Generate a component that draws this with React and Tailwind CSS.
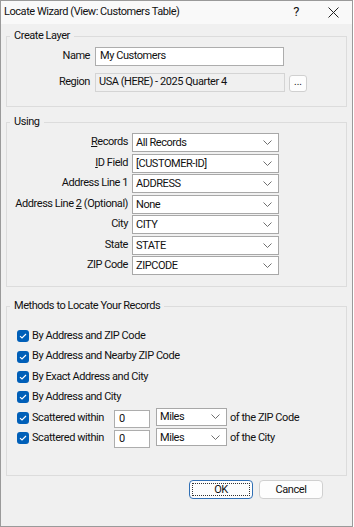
import React from 'react';

const Chevron = () => (
  <svg width="9" height="5" viewBox="0 0 9 5" className="shrink-0">
    <path d="M0.5 0.5L4.5 4.5L8.5 0.5" fill="none" stroke="#6f6f6f" strokeWidth="1" />
  </svg>
);

const Select = ({ value, className }) => (
  <div className={`flex items-center justify-between bg-white border border-[#a8a8a8] pl-[3px] pr-[6px] ${className}`}>
    <span className="leading-[15px]">{value}</span>
    <Chevron />
  </div>
);

const Check = () => (
  <div className="w-[12px] h-[12px] rounded-[3px] bg-[#005fb8] flex items-center justify-center shrink-0">
    <svg width="8" height="6" viewBox="0 0 8 6">
      <path d="M1 3.2L3 5L7 1" fill="none" stroke="white" strokeWidth="1.1" />
    </svg>
  </div>
);

const fields = [
  { label: <><u>R</u>ecords</>, value: 'All Records' },
  { label: <><u>I</u>D Field</>, value: '[CUSTOMER-ID]' },
  { label: 'Address Line 1', value: 'ADDRESS' },
  { label: <>Address Line <u>2</u> (Optional)</>, value: 'None' },
  { label: 'City', value: 'CITY' },
  { label: 'State', value: 'STATE' },
  { label: 'ZIP Code', value: 'ZIPCODE' },
];

const methods = [
  'By Address and ZIP Code',
  'By Address and Nearby ZIP Code',
  'By Exact Address and City',
  'By Address and City',
];

export default function App() {
  return (
    <div className="w-[354px] h-[527px] bg-white font-['Roboto',sans-serif] text-[11px] tracking-[-0.45px] text-[#111] overflow-hidden whitespace-nowrap">
      <div className="w-[353px] h-[527px] bg-[#f0f0f0] border border-[#9a9a9a] flex flex-col">
        <div className="h-[23px] bg-[#f9f9f9] flex items-center pl-[3px] pb-[1px] shrink-0">
          <span className="flex-1">Locate Wizard (View: Customers Table)</span>
          <span className="w-[14px] text-center mr-[25px] text-[13px]">?</span>
          <svg width="11" height="11" viewBox="0 0 11 11" className="mr-[13px]">
            <path d="M0.5 0.5L10.5 10.5M10.5 0.5L0.5 10.5" stroke="#222" strokeWidth="1" />
          </svg>
        </div>

        <fieldset className="mx-[5px] mt-[4px] border border-[#dcdcdc] pt-[3px] pb-[14px]">
          <legend className="ml-[3px] px-[4px] leading-[16px]">Create Layer</legend>
          <div className="flex items-center h-[19px]">
            <span className="w-[83px] text-right">Name</span>
            <div className="ml-[5px] w-[189px] h-[19px] bg-white border border-[#adadad] pl-[4px] flex items-center">My Customers</div>
          </div>
          <div className="flex items-center h-[19px] mt-[7px]">
            <span className="w-[83px] text-right">Region</span>
            <div className="ml-[5px] w-[190px] h-[19px] bg-[#f0f0f0] border border-[#d4d4d4] pl-[3px] flex items-center">USA (HERE) - 2025 Quarter 4</div>
            <div className="ml-[4px] mt-[2px] w-[18px] h-[17px] bg-[#fdfdfd] border border-[#d0d0d0] rounded-[3px] flex items-center justify-center text-[10px] tracking-normal leading-none pb-[3px]">...</div>
          </div>
        </fieldset>

        <fieldset className="mx-[5px] mt-[7px] border border-[#dcdcdc] pt-[3px] pb-[11px]">
          <legend className="ml-[3px] px-[4px] leading-[16px]">Using</legend>
          <div className="flex flex-col gap-[1.5px]">
            {fields.map((f, i) => (
              <div key={i} className="flex items-center h-[19px]">
                <span className="w-[121px] text-right">{f.label}</span>
                <Select value={f.value} className="ml-[4px] w-[147px] h-[19px]" />
              </div>
            ))}
          </div>
        </fieldset>

        <fieldset className="mx-[5px] mt-[11px] border border-[#dcdcdc] pt-[12px] pb-[27px]">
          <legend className="ml-[3px] px-[4px] leading-[16px]">Methods to Locate Your Records</legend>
          <div className="flex flex-col pl-[10px]">
            {methods.map((m) => (
              <div key={m} className="flex items-center h-[20.4px]">
                <Check />
                <span className="ml-[3px]">{m}</span>
              </div>
            ))}
            {['of the ZIP Code', 'of the City'].map((t) => (
              <div key={t} className="flex items-center h-[20.4px]">
                <Check />
                <span className="ml-[3px] w-[82px]">Scattered within</span>
                <div className="w-[36px] h-[18px] bg-white border border-[#adadad] pl-[4px] flex items-center mt-[2px]">0</div>
                <Select value="Miles" className="ml-[6px] w-[71px] h-[18px] -mt-[2px]" />
                <span className="ml-[3px]">{t}</span>
              </div>
            ))}
          </div>
        </fieldset>

        <div className="flex justify-end gap-[6px] mt-[4px] mr-[29px]">
          <button className="w-[64px] h-[19px] rounded-[4px] bg-[#fdfdfd] border border-[#2f6fb5] flex items-center justify-center p-[2px]">
            <span className="w-full h-full border border-dotted border-[#333] flex items-center justify-center leading-none">OK</span>
          </button>
          <button className="w-[64px] h-[19px] rounded-[4px] bg-[#fdfdfd] border border-[#d0d0d0] flex items-center justify-center leading-none">Cancel</button>
        </div>
      </div>
    </div>
  );
}
